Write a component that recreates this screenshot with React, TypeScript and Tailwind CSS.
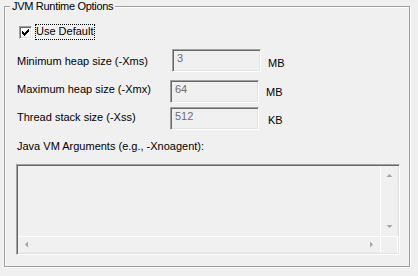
import React from "react";

const CHECK = [
  "......X",
  ".....XX",
  "X...XXX",
  "XX.XXX.",
  "XXXXX..",
  ".XXX...",
  "..X....",
];

function CheckMark() {
  const rects: React.ReactElement[] = [];
  CHECK.forEach((row, y) =>
    row.split("").forEach((c, x) => {
      if (c === "X") rects.push(<rect key={`${x}-${y}`} x={x} y={y} width={1} height={1} fill="#000" />);
    })
  );
  return (
    <svg width="7" height="7" viewBox="0 0 7 7" shapeRendering="crispEdges">
      {rects}
    </svg>
  );
}

function Arrow({ dir }: { dir: "up" | "down" | "left" | "right" }) {
  const pts: Record<string, string> = {
    up: "0.5,4 3.5,1 6.5,4",
    down: "0.5,1 3.5,4 6.5,1",
    left: "4,0.5 1,3.5 4,6.5",
    right: "1,0.5 4,3.5 1,6.5",
  };
  const vertical = dir === "up" || dir === "down";
  return (
    <svg width={vertical ? 7 : 5} height={vertical ? 5 : 7} viewBox={vertical ? "0 0 7 5" : "0 0 5 7"}>
      <polygon points={pts[dir]} fill="#a6a6a6" />
    </svg>
  );
}

const sunken =
  "border border-t-[#a0a0a0] border-l-[#a0a0a0] border-b-white border-r-white shadow-[inset_1px_1px_0_#696969,inset_-1px_-1px_0_#e3e3e3]";

function Field({ value }: { value: string }) {
  return (
    <div className={`w-[89px] h-[23px] bg-[#f0f0f0] ${sunken} pl-[4px] pt-[2px] leading-[13px] text-[#6d6d6d]`}>
      {value}
    </div>
  );
}

export default function App() {
  return (
    <div
      className="w-[418px] h-[276px] bg-[#f0f0f0] pt-[6px] pl-[4px] text-[11px] text-black"
      style={{ fontFamily: "'Liberation Sans', Arial, sans-serif" }}
    >
      <div className="relative w-[406px] h-[261px] border border-[#a0a0a0] shadow-[inset_1px_1px_0_#fff,1px_1px_0_#fff]">
        <span className="absolute left-[5px] top-[-7px] bg-[#f0f0f0] px-[2px] leading-[13px] tracking-[-0.3px] whitespace-nowrap">
          JVM Runtime Options
        </span>

        <div className="flex flex-col">
          {/* checkbox row */}
          <div className="flex items-center mt-[17px] ml-[14px]">
            <div className={`w-[13px] h-[13px] bg-white ${sunken} flex items-center justify-center`}>
              <CheckMark />
            </div>
            <div className="ml-[3px] h-[16px] border border-dotted border-black leading-[13px] pr-[1px] whitespace-nowrap">
              Use Default
            </div>
          </div>

          {/* row 1 */}
          <div className="flex items-start mt-[9px] ml-[12px]">
            <div className="w-[155px] mt-[6px] leading-[13px] whitespace-nowrap">Minimum heap size (-Xms)</div>
            <Field value="3" />
            <div className="ml-[7px] mt-[8px] leading-[13px]">MB</div>
          </div>

          {/* row 2 */}
          <div className="flex items-start mt-[8px] ml-[12px]">
            <div className="w-[153px] mt-[3px] leading-[13px] whitespace-nowrap">Maximum heap size (-Xmx)</div>
            <Field value="64" />
            <div className="ml-[7px] mt-[6px] leading-[13px]">MB</div>
          </div>

          {/* row 3 */}
          <div className="flex items-start mt-[4px] ml-[12px]">
            <div className="w-[153px] mt-[4px] leading-[13px] whitespace-nowrap">Thread stack size (-Xss)</div>
            <Field value="512" />
            <div className="ml-[9px] mt-[7px] leading-[13px]">KB</div>
          </div>

          <div className="mt-[10px] ml-[12px] leading-[13px] whitespace-nowrap">Java VM Arguments (e.g., -Xnoagent):</div>

          {/* text area */}
          <div className={`mt-[11px] ml-[11px] w-[384px] h-[91px] bg-[#f0f0f0] ${sunken} p-[1px]`}>
            <div className="grid grid-cols-[363px_17px] grid-rows-[70px_17px] w-full h-full">
              <div className="border-r border-white" />
              <div className="flex flex-col items-center justify-between py-[7px] border-r border-[#e8e8e8] bg-[#f0f0f0]">
                <Arrow dir="up" />
                <Arrow dir="down" />
              </div>
              <div className="flex items-center justify-between px-[6px] border-t border-white border-r border-r-white border-b border-b-[#e8e8e8] bg-[#f0f0f0]">
                <Arrow dir="left" />
                <Arrow dir="right" />
              </div>
              <div className="border-t border-white border-r border-r-white bg-[#f0f0f0]" />
            </div>
          </div>
        </div>
      </div>
    </div>
  );
}
